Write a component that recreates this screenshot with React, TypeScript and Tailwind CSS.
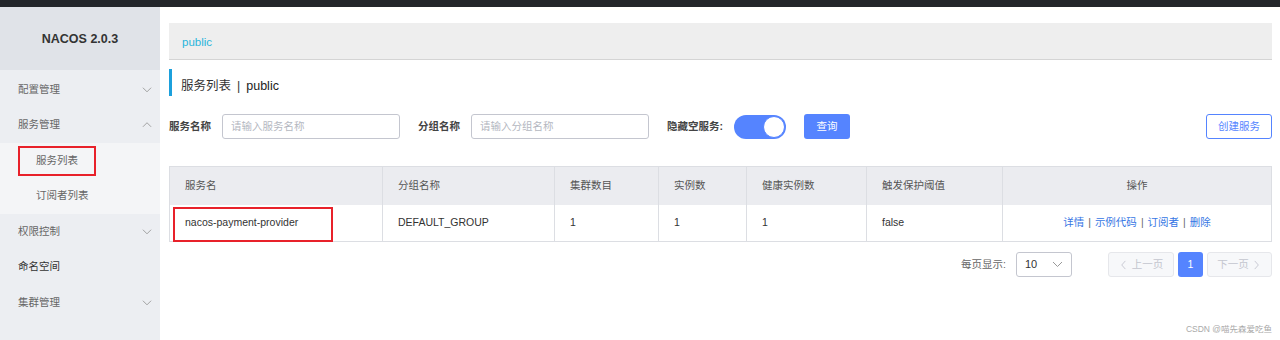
import React from 'react';

const FONT = '"Liberation Sans", "Noto Sans CJK SC", sans-serif';

// sidebar menu: top-level entries, with an optional child list
const MENU = [
    { title: '配置管理', arrow: 'down' },
    { title: '服务管理', arrow: 'up', children: ['服务列表', '订阅者列表'] },
    { title: '权限控制', arrow: 'down' },
    { title: '命名空间', arrow: null },
    { title: '集群管理', arrow: 'down' },
];

const COLUMNS = [
    { title: '服务名', width: 213 },
    { title: '分组名称', width: 172 },
    { title: '集群数目', width: 104 },
    { title: '实例数', width: 88 },
    { title: '健康实例数', width: 120 },
    { title: '触发保护阈值', width: 136 },
    { title: '操作', width: 269 },
];

const ROWS = [
    { name: 'nacos-payment-provider', group: 'DEFAULT_GROUP', clusters: 1, instances: 1, healthy: 1, threshold: 'false' },
];

function Chevron({ dir, className }: { dir: 'up' | 'down' | 'left' | 'right'; className?: string }) {
    const d = {
        down: 'M1 3l4.5 4.5L10 3',
        up: 'M1 7.5L5.5 3 10 7.5',
        left: 'M7 1L3 5.5 7 10',
        right: 'M3 1l4 4.5L3 10',
    }[dir];
    return (
        <svg className={className} viewBox="0 0 11 11" fill="none" stroke="currentColor" strokeWidth={1}>
            <path d={d} />
        </svg>
    );
}

function Sidebar() {
    return (
        <div className="w-[160px] shrink-0 bg-[#eceef2] flex flex-col">
            <div className="h-[63px] bg-[#e0e3e8] flex items-center justify-center">
                <span className="text-[12.5px] font-bold text-[#333] pt-[2px]">NACOS 2.0.3</span>
            </div>
            <div className="pt-[2px]">
                {MENU.map((item) => (
                    <div key={item.title}>
                        <div className="h-[35.5px] flex items-center justify-between pl-[18px] pr-[8px]">
                            <span className={`text-[10.5px] ${item.arrow ? 'text-[#666]' : 'text-[#333]'}`}>{item.title}</span>
                            {item.arrow && <Chevron dir={item.arrow as 'up' | 'down'} className="w-[10px] h-[10px] text-[#999]" />}
                        </div>
                        {item.children && (
                            <div className="bg-[#f4f5f7]">
                                {item.children.map((child) => (
                                    <div key={child} className="h-[35.5px] flex items-center pl-[36px]">
                                        <span className="text-[10.5px] text-[#666]">{child}</span>
                                    </div>
                                ))}
                            </div>
                        )}
                    </div>
                ))}
            </div>
        </div>
    );
}

function FilterBar() {
    return (
        <div className="mt-[18px] h-[25px] flex items-center">
            <span className="text-[10.5px] font-bold text-[#444] mr-[11px]">服务名称</span>
            <div className="w-[178px] h-[25px] border border-[#c4c6cf] rounded-[3px] flex items-center pl-[8px]">
                <span className="text-[10.5px] text-[#b4b7bf]">请输入服务名称</span>
            </div>
            <span className="text-[10.5px] font-bold text-[#444] ml-[18px] mr-[11px]">分组名称</span>
            <div className="w-[178px] h-[25px] border border-[#c4c6cf] rounded-[3px] flex items-center pl-[8px]">
                <span className="text-[10.5px] text-[#b4b7bf]">请输入分组名称</span>
            </div>
            <span className="text-[10.5px] font-bold text-[#444] ml-[18px] mr-[11px]">隐藏空服务:</span>
            <div className="w-[52px] h-[24px] rounded-full bg-[#5584ff] flex items-center justify-end pr-[1px]">
                <div className="w-[22px] h-[22px] rounded-full bg-white border border-[#5584ff]"></div>
            </div>
            <button className="ml-[18px] w-[46px] h-[25px] rounded-[3px] bg-[#5584ff] text-white text-[10.5px]">查询</button>
            <button className="ml-auto w-[66px] h-[25px] rounded-[3px] border border-[#5584ff] bg-white text-[#5584ff] text-[10.5px]">创建服务</button>
        </div>
    );
}

function ServiceTable() {
    return (
        <table className="mt-[27px] w-full table-fixed border-collapse border border-[#dcdee3]">
            <colgroup>
                {COLUMNS.map((c) => <col key={c.title} style={{ width: c.width }} />)}
            </colgroup>
            <thead>
                <tr className="h-[38px] bg-[#ebecf0]">
                    {COLUMNS.map((c, i) => (
                        <th key={c.title} className={`border-r border-[#dcdee3] font-normal text-[10.5px] text-[#555] ${i === COLUMNS.length - 1 ? 'text-center' : 'text-left pl-[15px]'}`}>
                            {c.title}
                        </th>
                    ))}
                </tr>
            </thead>
            <tbody>
                {ROWS.map((r) => (
                    <tr key={r.name} className="h-[37px] bg-white text-[10.5px] text-[#333]">
                        <td className="border-r border-[#dcdee3] pl-[15px]">{r.name}</td>
                        <td className="border-r border-[#dcdee3] pl-[15px]">{r.group}</td>
                        <td className="border-r border-[#dcdee3] pl-[15px]">{r.clusters}</td>
                        <td className="border-r border-[#dcdee3] pl-[15px]">{r.instances}</td>
                        <td className="border-r border-[#dcdee3] pl-[15px]">{r.healthy}</td>
                        <td className="border-r border-[#dcdee3] pl-[15px]">{r.threshold}</td>
                        <td className="text-center">
                            <span className="text-[#3576e4]">详情</span>
                            <span className="mx-[4px] text-[#666]">|</span>
                            <span className="text-[#3576e4]">示例代码</span>
                            <span className="mx-[4px] text-[#666]">|</span>
                            <span className="text-[#3576e4]">订阅者</span>
                            <span className="mx-[4px] text-[#666]">|</span>
                            <span className="text-[#3576e4]">删除</span>
                        </td>
                    </tr>
                ))}
            </tbody>
        </table>
    );
}

function Pagination() {
    return (
        <div className="mt-[10px] h-[25px] flex items-center justify-end">
            <span className="text-[10.5px] text-[#666] mr-[10px]">每页显示:</span>
            <div className="w-[56px] h-[25px] border border-[#c4c6cf] rounded-[3px] flex items-center justify-between pl-[8px] pr-[8px]">
                <span className="text-[11px] text-[#333]">10</span>
                <Chevron dir="down" className="w-[11px] h-[11px] text-[#999]" />
            </div>
            <div className="ml-[36px] w-[66px] h-[25px] border border-[#e6e7eb] bg-[#f7f8fa] rounded-[3px] flex items-center justify-center gap-[3px] text-[#c4c6cf]">
                <Chevron dir="left" className="w-[10px] h-[10px]" />
                <span className="text-[10.5px]">上一页</span>
            </div>
            <div className="ml-[4px] w-[25px] h-[25px] rounded-[3px] bg-[#5584ff] text-white text-[10.5px] flex items-center justify-center">1</div>
            <div className="ml-[4px] w-[65px] h-[25px] border border-[#e6e7eb] bg-[#f7f8fa] rounded-[3px] flex items-center justify-center gap-[3px] text-[#c4c6cf]">
                <span className="text-[10.5px]">下一页</span>
                <Chevron dir="right" className="w-[10px] h-[10px]" />
            </div>
        </div>
    );
}

export default function App() {
    return (
        <div className="w-[1280px] h-[340px] flex flex-col bg-white relative overflow-hidden" style={{ fontFamily: FONT }}>
            <div className="h-[7px] bg-[#23262b] shrink-0"></div>
            <div className="flex flex-1">
                <Sidebar />
                <div className="flex-1 px-[9px] pt-[16px]">
                    <div className="h-[37px] bg-[#eeeeee] border-b border-[#d4d4d4] flex items-center pl-[13px] pt-[3px]">
                        <span className="text-[11.5px] text-[#28b5dc]">public</span>
                    </div>
                    <div className="mt-[9px] h-[27px] border-l-[3px] border-[#1ca0dc] flex items-center pl-[9px] pt-[7px]">
                        <span className="text-[12.5px] text-[#333]">服务列表</span>
                        <span className="text-[12.5px] text-[#333] mx-[6px]">|</span>
                        <span className="text-[12.5px] text-[#222]">public</span>
                    </div>
                    <FilterBar />
                    <ServiceTable />
                    <Pagination />
                </div>
            </div>

            {/* annotation boxes drawn over the screenshot */}
            <div className="absolute left-[18px] top-[146px] w-[78px] h-[30px] border-2 border-[#e8212a]"></div>
            <div className="absolute left-[173px] top-[207px] w-[160px] h-[35px] border-2 border-[#e8212a]"></div>

            <span className="absolute right-[8px] bottom-[4px] text-[8.5px] text-[#aaa]">CSDN @喵先森爱吃鱼</span>
        </div>
    );
}
